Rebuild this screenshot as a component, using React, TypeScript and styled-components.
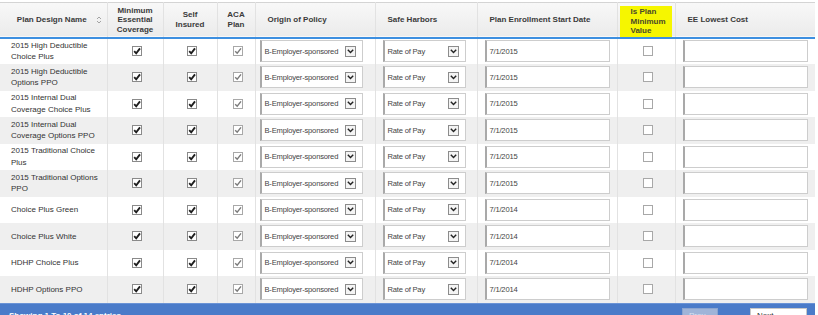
import React from "react";
import styled, { createGlobalStyle } from "styled-components";

const GlobalStyle = createGlobalStyle`
  html, body {
    margin: 0;
    padding: 0;
    background: #ffffff;
  }
  body {
    font-family: "Liberation Sans", Arial, sans-serif;
    color: #333333;
  }
`;

const Page = styled.div`
  width: 818px;
  height: 315px;
  overflow: hidden;
  padding-top: 2px;
  box-sizing: border-box;
`;

const Table = styled.table`
  width: 815px;
  table-layout: fixed;
  border-collapse: collapse;
  border-top: 1px solid #d4d4d4;
`;

const HeadRow = styled.tr`
  height: 35px;
  background: linear-gradient(#f8f8f8, #ebebeb);
  border-bottom: 2px solid #3d8fe0;
`;

const Th = styled.th<{ $align?: "left" | "center" }>`
  font-size: 8px;
  font-weight: bold;
  line-height: 9.5px;
  color: #3a3a3a;
  text-align: ${(p) => p.$align || "center"};
  padding: ${(p) => (p.$align === "left" ? "0 0 0 12px" : "0 2px")};
  border-left: 1px solid #e2e2e2;
  vertical-align: middle;
  &:first-child {
    border-left: none;
    padding-left: 14px;
  }
`;

const SortIcon = styled.span`
  display: inline-block;
  margin-left: 9px;
  vertical-align: middle;
  line-height: 0;
`;

const Highlight = styled.div`
  width: 52px;
  margin: 3px 0 0 2px;
  box-sizing: border-box;
  background: #f6f600;
  color: #4a4a2a;
  text-align: left;
  padding: 1px 0 1px 11px;
`;

const BodyRow = styled.tr`
  height: 26.5px;
  background: #ffffff;
  &:nth-child(even) {
    background: #efefef;
  }
`;

const Td = styled.td<{ $center?: boolean; $inset?: number }>`
  font-size: 8px;
  line-height: 11.5px;
  color: #333333;
  padding: 0 0 0 ${(p) => p.$inset ?? 4}px;
  border-left: 1px solid #e2e2e2;
  text-align: ${(p) => (p.$center ? "center" : "left")};
  vertical-align: middle;
  &:first-child {
    border-left: none;
    padding-left: 11px;
  }
`;

const Field = styled.div<{ $width: number }>`
  width: ${(p) => p.$width}px;
  height: 22px;
  box-sizing: border-box;
  background: #ffffff;
  border: 1px solid #cdcdcd;
  border-left: 2px solid #a9a9a9;
  display: flex;
  align-items: center;
  justify-content: space-between;
  gap: 3px;
  padding: 0 6px 0 3px;
  font-size: 7.6px;
  letter-spacing: -0.2px;
  white-space: nowrap;
  overflow: hidden;
  color: #444444;
`;

const DropButton = styled.span`
  flex: none;
  width: 11px;
  height: 11px;
  box-sizing: border-box;
  border: 1px solid #8c8c8c;
  background: #f4f4f4;
  display: flex;
  align-items: center;
  justify-content: center;
`;

const Box = styled.span<{ $muted?: boolean }>`
  display: inline-block;
  width: 10px;
  height: 10px;
  box-sizing: border-box;
  border: 1px solid ${(p) => (p.$muted ? "#a8a8a8" : "#8a8a8a")};
  background: #ffffff;
  vertical-align: middle;
  position: relative;
  line-height: 0;
`;

const Footer = styled.div`
  width: 815px;
  height: 30px;
  background: #4a7bc9;
  border-top: 1px solid #6a93d6;
  display: flex;
  align-items: flex-start;
  box-sizing: border-box;
  padding: 4px 8px 0 9px;
  font-size: 8px;
  color: #ffffff;
`;

const FooterText = styled.span`
  flex: 1;
  padding-top: 3px;
  font-weight: bold;
`;

const PagerButton = styled.span<{ $light?: boolean }>`
  display: inline-block;
  height: 14px;
  box-sizing: border-box;
  padding: 2px 6px;
  font-size: 8px;
  margin-left: ${(p) => (p.$light ? "0" : "32px")};
  width: ${(p) => (p.$light ? "36px" : "57px")};
  background: ${(p) => (p.$light ? "#9fb4d8" : "#ffffff")};
  color: ${(p) => (p.$light ? "#d8e2f2" : "#333333")};
  border: 1px solid ${(p) => (p.$light ? "#8aa4cf" : "#c8c8c8")};
`;

function CheckBox({ checked, muted }: { checked: boolean; muted?: boolean }) {
  return (
    <Box $muted={muted}>
      {checked && (
        <svg width="10" height="10" viewBox="0 0 10 10" style={{ position: "absolute", left: -1, top: -1 }}>
          <path
            d="M2.2 5.2 L4.2 7.3 L8 2.4"
            fill="none"
            stroke={muted ? "#7a7a7a" : "#1e1e1e"}
            strokeWidth={muted ? 1.4 : 1.9}
          />
        </svg>
      )}
    </Box>
  );
}

function Select({ value, width }: { value: string; width: number }) {
  return (
    <Field $width={width}>
      <span>{value}</span>
      <DropButton>
        <svg width="7" height="5" viewBox="0 0 7 5">
          <path d="M0.8 0.8 L3.5 3.6 L6.2 0.8" fill="none" stroke="#222" strokeWidth="1.4" />
        </svg>
      </DropButton>
    </Field>
  );
}

const plans = [
  { name: "2015 High Deductible Choice Plus", date: "7/1/2015" },
  { name: "2015 High Deductible Options PPO", date: "7/1/2015" },
  { name: "2015 Internal Dual Coverage Choice Plus", date: "7/1/2015" },
  { name: "2015 Internal Dual Coverage Options PPO", date: "7/1/2015" },
  { name: "2015 Traditional Choice Plus", date: "7/1/2015" },
  { name: "2015 Traditional Options PPO", date: "7/1/2015" },
  { name: "Choice Plus Green", date: "7/1/2014" },
  { name: "Choice Plus White", date: "7/1/2014" },
  { name: "HDHP Choice Plus", date: "7/1/2014" },
  { name: "HDHP Options PPO", date: "7/1/2014" },
];

export default function App() {
  return (
    <Page>
      <GlobalStyle />
      <Table>
        <colgroup>
          <col style={{ width: 107 }} />
          <col style={{ width: 56 }} />
          <col style={{ width: 54 }} />
          <col style={{ width: 38 }} />
          <col style={{ width: 120 }} />
          <col style={{ width: 102 }} />
          <col style={{ width: 140 }} />
          <col style={{ width: 58 }} />
          <col style={{ width: 140 }} />
        </colgroup>
        <thead>
          <HeadRow>
            <Th>
              Plan Design Name
              <SortIcon>
                <svg width="6" height="8" viewBox="0 0 6 8">
                  <path d="M1 3 L3 1 L5 3 M1 5 L3 7 L5 5" fill="none" stroke="#9a9a9a" strokeWidth="0.9" />
                </svg>
              </SortIcon>
            </Th>
            <Th>
              Minimum
              <br />
              Essential
              <br />
              Coverage
            </Th>
            <Th>
              Self
              <br />
              Insured
            </Th>
            <Th>
              ACA
              <br />
              Plan
            </Th>
            <Th $align="left">Origin of Policy</Th>
            <Th $align="left">Safe Harbors</Th>
            <Th $align="left">Plan Enrollment Start Date</Th>
            <Th $align="left" style={{ padding: 0 }}>
              <Highlight>
                Is Plan
                <br />
                Minimum
                <br />
                Value
              </Highlight>
            </Th>
            <Th $align="left">EE Lowest Cost</Th>
          </HeadRow>
        </thead>
        <tbody>
          {plans.map((plan) => (
            <BodyRow key={plan.name}>
              <Td>{plan.name}</Td>
              <Td $center>
                <CheckBox checked />
              </Td>
              <Td $center>
                <CheckBox checked />
              </Td>
              <Td $center>
                <CheckBox checked muted />
              </Td>
              <Td>
                <Select value="B-Employer-sponsored" width={103} />
              </Td>
              <Td $inset={7}>
                <Select value="Rate of Pay" width={83} />
              </Td>
              <Td $inset={7}>
                <Field $width={125}>{plan.date}</Field>
              </Td>
              <Td $center>
                <CheckBox checked={false} muted />
              </Td>
              <Td $inset={7}>
                <Field $width={125} />
              </Td>
            </BodyRow>
          ))}
        </tbody>
      </Table>
      <Footer>
        <FooterText>Showing 1 To 10 of 14 entries</FooterText>
        <PagerButton $light>Prev</PagerButton>
        <PagerButton>Next</PagerButton>
      </Footer>
    </Page>
  );
}
